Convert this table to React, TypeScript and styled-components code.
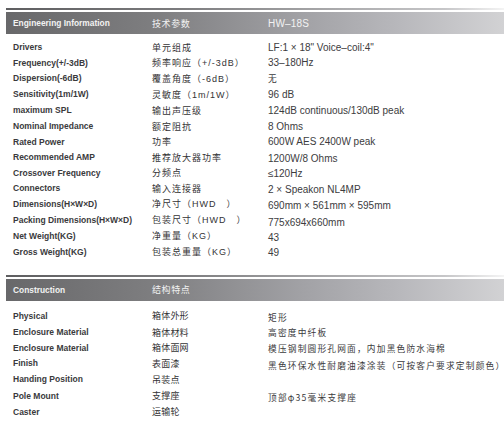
import React from "react";
import styled, { createGlobalStyle } from "styled-components";

const Global = createGlobalStyle`
  html, body { margin: 0; padding: 0; background: #ffffff; }
  body { font-family: "Liberation Sans", Arial, "Noto Sans CJK SC", sans-serif; }
`;

const Page = styled.div`
  width: 504px;
  height: 434px;
  overflow: hidden;
  padding-left: 6px;
  box-sizing: border-box;
  display: flex;
  flex-direction: column;
`;

const Section = styled.section<{ $top: number; $padTop: number }>`
  margin-top: ${(p) => p.$top}px;
  display: flex;
  flex-direction: column;
  & > ul { padding-top: ${(p) => p.$padTop}px; }
`;

const Rule = styled.div`
  height: 2px;
  margin-bottom: 2px;
  background: linear-gradient(to right, #5e5e60 0%, #7c7c7e 35%, #a8a8aa 65%, #c6c6c8 88%, #f4f4f4 100%);
`;

const Header = styled.div`
  height: 22px;
  display: grid;
  grid-template-columns: 139px 116px 1fr;
  align-items: center;
  padding-left: 7px;
  background: linear-gradient(to right, #68686a 0%, #7e7e80 30%, #a2a2a6 60%, #b9b9bd 80%, #d2d2d4 100%);
  color: #f2f2f2;
`;

const HeadLabel = styled.span`
  font-size: 8.4px;
  font-weight: 700;
`;

const HeadCn = styled.span`
  font-family: "Noto Sans CJK SC", sans-serif;
  font-size: 9px;
  letter-spacing: 0.6px;
`;

const HeadModel = styled.span`
  font-size: 10px;
  letter-spacing: 0.2px;
`;

const List = styled.ul`
  list-style: none;
  margin: 0;
  padding-left: 7px;
  display: flex;
  flex-direction: column;
`;

const Row = styled.li<{ $h: number }>`
  height: ${(p) => p.$h}px;
  display: grid;
  grid-template-columns: 139px 116px 1fr;
  align-items: center;
  white-space: nowrap;
`;

const Label = styled.span`
  font-size: 8.5px;
  font-weight: 700;
  color: #3a3a3c;
`;

const Cn = styled.span<{ $spacing: number }>`
  font-family: "Liberation Sans", "Noto Sans CJK SC", sans-serif;
  font-size: 9px;
  letter-spacing: ${(p) => p.$spacing}px;
  color: #333335;
`;

const Value = styled.span<{ $shift: number }>`
  font-family: "Liberation Sans", "Noto Sans CJK SC", sans-serif;
  font-size: 10px;
  color: #3c3c3e;
  position: relative;
  top: ${(p) => p.$shift}px;
`;

const CnValue = styled.span<{ $shift: number }>`
  font-family: "Noto Sans CJK SC", sans-serif;
  font-size: 8.7px;
  letter-spacing: 1.2px;
  color: #3a3a3c;
  position: relative;
  top: ${(p) => p.$shift}px;
`;

type Item = { en: string; cn: string; val: string; h: number; shift?: number; cnVal?: boolean };

const specs: Item[] = [
  { en: "Drivers", cn: "单元组成", val: "LF:1 × 18\"  Voice–coil:4\"", h: 16 },
  { en: "Frequency(+/-3dB)", cn: "频率响应（+/-3dB）", val: "33–180Hz", h: 15.5 },
  { en: "Dispersion(-6dB)", cn: "覆盖角度（-6dB）", val: "无", h: 15.5, cnVal: true },
  { en: "Sensitivity(1m/1W)", cn: "灵敏度（1m/1W）", val: "96 dB", h: 16 },
  { en: "maximum SPL", cn: "输出声压级", val: "124dB continuous/130dB peak", h: 16 },
  { en: "Nominal Impedance", cn: "额定阻抗", val: "8 Ohms", h: 16 },
  { en: "Rated Power", cn: "功率", val: "600W AES 2400W peak", h: 15.5 },
  { en: "Recommended  AMP", cn: "推荐放大器功率", val: "1200W/8 Ohms", h: 15.5, shift: 1.5 },
  { en: "Crossover Frequency", cn: "分频点", val: "≤120Hz", h: 15.5, shift: 1 },
  { en: "Connectors", cn: "输入连接器", val: "2 × Speakon NL4MP", h: 15.5, shift: 1 },
  { en: "Dimensions(H×W×D)", cn: "净尺寸（HWD　）", val: "690mm × 561mm × 595mm", h: 15.5, shift: 2 },
  { en: "Packing Dimensions(H×W×D)", cn: "包装尺寸（HWD　）", val: "775x694x660mm", h: 16, shift: 3 },
  { en: "Net Weight(KG)", cn: "净重量（KG）", val: "43", h: 16, shift: 2 },
  { en: "Gross Weight(KG)", cn: "包装总重量（KG）", val: "49", h: 16, shift: 1 },
];

const construction: Item[] = [
  { en: "Physical", cn: "箱体外形", val: "矩形", h: 16.5, shift: 1.5, cnVal: true },
  { en: "Enclosure Material", cn: "箱体材料", val: "高密度中纤板", h: 16, cnVal: true },
  { en: "Enclosure Material", cn: "箱体面网", val: "模压钢制圆形孔网面，内加黑色防水海棉", h: 15.5, shift: 1, cnVal: true },
  { en: "Finish", cn: "表面漆", val: "黑色环保水性耐磨油漆涂装（可按客户要求定制颜色）", h: 15.5, shift: 2, cnVal: true },
  { en: "Handing Position", cn: "吊装点", val: "", h: 16.5, cnVal: true },
  { en: "Pole Mount", cn: "支撑座", val: "顶部φ35毫米支撑座", h: 16, shift: 2, cnVal: true },
  { en: "Caster", cn: "运输轮", val: "", h: 16, cnVal: true },
];

function Rows({ items, spacing }: { items: Item[]; spacing: number }) {
  return (
    <List>
      {items.map((it, i) => (
        <Row key={i} $h={it.h}>
          <Label>{it.en}</Label>
          <Cn $spacing={spacing}>{it.cn}</Cn>
          {it.cnVal ? (
            <CnValue $shift={it.shift ?? 0}>{it.val}</CnValue>
          ) : (
            <Value $shift={it.shift ?? 0}>{it.val}</Value>
          )}
        </Row>
      ))}
    </List>
  );
}

export default function App() {
  return (
    <>
      <Global />
      <Page>
        <Section $top={8} $padTop={5}>
          <Rule />
          <Header>
            <HeadLabel>Engineering Information</HeadLabel>
            <HeadCn>技术参数</HeadCn>
            <HeadModel>HW–18S</HeadModel>
          </Header>
          <Rows items={specs} spacing={1} />
        </Section>
        <Section $top={15} $padTop={7}>
          <Rule />
          <Header>
            <HeadLabel>Construction</HeadLabel>
            <HeadCn>结构特点</HeadCn>
            <HeadModel></HeadModel>
          </Header>
          <Rows items={construction} spacing={0.2} />
        </Section>
      </Page>
    </>
  );
}
